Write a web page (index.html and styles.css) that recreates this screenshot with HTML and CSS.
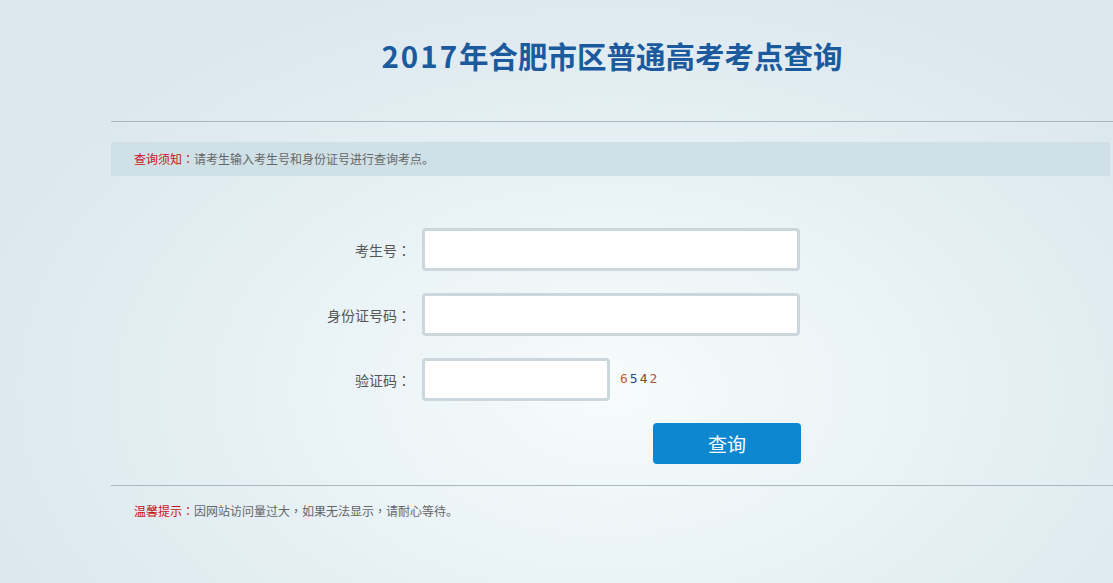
FILE: index.html
```html
<!DOCTYPE html>
<html lang="zh-CN">
<head>
<meta charset="utf-8">
<title>2017年合肥市区普通高考考点查询</title>
<link rel="stylesheet" href="styles.css">
</head>
<body>
<div class="page">
  <h1 class="title"><span class="num">2017</span>年合肥市区普通高考考点查询</h1>
  <div class="rule"></div>
  <div class="notice"><span class="red">查询须知<span class="punct" lang="zh-TW">：</span></span>请考生输入考生号和身份证号进行查询考点。</div>
  <form class="form">
    <label class="label">考生号<span class="punct" lang="zh-TW">：</span></label>
    <div class="field"><input class="input" type="text"></div>
    <label class="label">身份证号码<span class="punct" lang="zh-TW">：</span></label>
    <div class="field"><input class="input" type="text"></div>
    <label class="label">验证码<span class="punct" lang="zh-TW">：</span></label>
    <div class="field captcha-row"><input class="input short" type="text"><span class="captcha"><span class="c1">6</span><span class="c2">5</span><span class="c3">4</span><span class="c4">2</span></span></div>
    <span></span>
    <div class="field btn-row"><button class="btn" type="button">查询</button></div>
  </form>
  <div class="rule bottom"></div>
  <div class="tip"><span class="red">温馨提示<span class="punct" lang="zh-TW">：</span></span>因网站访问量过大<span class="punct" lang="zh-TW">，</span>如果无法显示<span class="punct" lang="zh-TW">，</span>请耐心等待。</div>
</div>
</body>
</html>
```
FILE: styles.css
```css
html, body {
  margin: 0;
  padding: 0;
  height: 100%;
}
body {
  background: radial-gradient(ellipse 650px 420px at 610px 390px, #f7fbfc 0%, #eaf3f6 45%, #dbe8ee 100%);
  background-color: #d9e7ed;
  font-family: "Noto Sans CJK SC", "Microsoft YaHei", sans-serif;
  color: #555;
}
.page {
  margin-left: 111px;
  width: 1002px;
  padding-top: 34px;
}
.title {
  margin: 0;
  text-align: center;
  font-size: 29.5px;
  line-height: 42px;
  font-weight: bold;
  color: #1c5a9e;
}
.title .num {
  letter-spacing: 2px;
}
.punct {
  font-family: "Noto Sans CJK TC", sans-serif;
}
.rule {
  height: 1px;
  background: #a9b8be;
  margin-top: 45px;
}
.rule.bottom {
  margin-top: 21px;
}
.notice {
  margin-top: 20px;
  width: 999px;
  height: 34px;
  line-height: 34px;
  background: #cfe0e6;
  font-size: 12px;
  color: #666;
  padding-left: 23px;
  box-sizing: border-box;
}
.red {
  color: #cc1111;
}
.form {
  display: grid;
  grid-template-columns: 300px 378px;
  column-gap: 11px;
  row-gap: 22px;
  margin-top: 52px;
  align-items: center;
}
.label {
  text-align: right;
  font-size: 14px;
  color: #555;
}
.field {
  display: flex;
  align-items: center;
}
.input {
  width: 378px;
  height: 43px;
  box-sizing: border-box;
  border: 3px solid #cbd7dc;
  border-radius: 4px;
  background: #fff;
  outline: none;
  padding: 0 8px;
}
.input.short {
  width: 188px;
}
.captcha {
  margin-left: 10px;
  margin-top: -3px;
  font-family: "DejaVu Sans Mono", monospace;
  font-size: 13px;
  letter-spacing: 2px;
}
.c1 { color: #c0602a; }
.c2 { color: #2a4c94; }
.c3 { color: #8c4a2c; }
.c4 { color: #a8583a; }
.btn-row {
  justify-content: flex-end;
}
.btn {
  width: 148px;
  height: 41px;
  border: none;
  border-radius: 4px;
  background: #0d88d0;
  color: #fff;
  font-family: "Noto Sans CJK SC", sans-serif;
  font-size: 19px;
  margin-right: -1px;
}
.tip {
  margin-top: 15px;
  padding-left: 23px;
  font-size: 12px;
  line-height: 20px;
  color: #666;
}
```
